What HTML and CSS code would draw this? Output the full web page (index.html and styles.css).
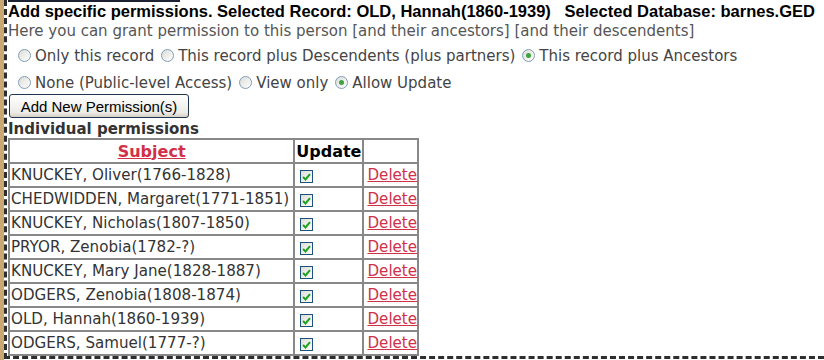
FILE: index.html
```html
<!DOCTYPE html>
<html lang="en">
<head>
  <meta charset="UTF-8" />
  <title>Permissions</title>
  <link rel="stylesheet" href="styles.css">
</head>
<body>

  <div class="page">
    <div class="topbar"></div>

    <!-- Heading with the record and database in use -->
    <div class="heading">Add specific permissions. Selected Record: OLD, Hannah(1860-1939) &nbsp; Selected Database: barnes.GED</div>
    <div class="intro">Here you can grant permission to this person [and their ancestors] [and their descendents]</div>

    <!-- Scope of the permission -->
    <div class="options">
      <label><span class="radio"></span>Only this record</label>
      <label><span class="radio"></span>This record plus Descendents (plus partners)</label>
      <label><span class="radio on"></span>This record plus Ancestors</label>
    </div>

    <!-- Access level -->
    <div class="options">
      <label><span class="radio"></span>None (Public-level Access)</label>
      <label><span class="radio"></span>View only</label>
      <label><span class="radio on"></span>Allow Update</label>
    </div>

    <button class="addBtn">Add New Permission(s)</button>

    <div class="subhead">Individual permissions</div>

    <table class="perms">
      <thead>
        <tr>
          <th class="subject"><a href="#">Subject</a></th>
          <th>Update</th>
          <th></th>
        </tr>
      </thead>
      <tbody id="rows"></tbody>
    </table>
  </div>

  <script>
    // People that already have permissions on this record
    const people = [
      "KNUCKEY, Oliver(1766-1828)",
      "CHEDWIDDEN, Margaret(1771-1851)",
      "KNUCKEY, Nicholas(1807-1850)",
      "PRYOR, Zenobia(1782-?)",
      "KNUCKEY, Mary Jane(1828-1887)",
      "ODGERS, Zenobia(1808-1874)",
      "OLD, Hannah(1860-1939)",
      "ODGERS, Samuel(1777-?)"
    ];

    const tick = '<svg width="9" height="8" viewBox="0 0 9 8"><path d="M1 4 L3.5 6.5 L8 1.2" fill="none" stroke="#21a121" stroke-width="2"/></svg>';

    const body = document.getElementById("rows");
    people.forEach(name => {
      const tr = document.createElement("tr");
      tr.innerHTML = `
        <td>${name}</td>
        <td><span class="check">${tick}</span></td>
        <td><a href="#">Delete</a></td>
      `;
      body.appendChild(tr);
    });
  </script>

</body>
</html>
```

FILE: styles.css
```css
/* Old-style admin page with a tan strip on the left */
body {
  margin: 0;
  min-height: 100vh;
  border-left: 4px solid #c9a874;
  background-color: #fff;
  font-family: "DejaVu Sans", Verdana, sans-serif;
  font-size: 15px;
  color: #333;
}

.page {
  background: #fff;
  border-left: 3px dashed #2e2e2e;
  border-bottom: 3px dashed #2e2e2e;
  padding: 0 0 0 1px;
}

.topbar {
  width: 172px;
  border-bottom: 2px solid #1c2233;
}

.heading {
  font-family: "Liberation Sans", Arial, sans-serif;
  font-weight: bold;
  font-size: 16.5px;
  color: #000;
  line-height: 19px;
}

.intro {
  color: #555;
  line-height: 21px;
}

/* Rows of radio choices */
.options {
  display: flex;
  gap: 7px;
  padding-left: 10px;
  height: 27px;
  align-items: center;
  color: #444;
}

.options label {
  display: flex;
  align-items: center;
  gap: 4px;
}

.radio {
  width: 11px;
  height: 11px;
  border: 1px solid #7f9db9;
  border-radius: 50%;
  background: linear-gradient(135deg, #dcdcd6, #fff);
  position: relative;
}

.radio.on::after {
  content: "";
  position: absolute;
  left: 3px;
  top: 3px;
  width: 5px;
  height: 5px;
  border-radius: 50%;
  background: #3fa33f;
}

.addBtn {
  margin: -2px 0 0 1px;
  height: 24px;
  width: 180px;
  padding: 0;
  font-family: "Liberation Sans", Arial, sans-serif;
  font-size: 15px;
  color: #000;
  border: 1px solid #1f3550;
  border-radius: 3px;
  background: linear-gradient(#fff, #ecebe6 80%, #d6d0c5);
}

.subhead {
  font-weight: bold;
  color: #333;
  line-height: 18px;
  margin-top: 2px;
}

/* Permissions table */
.perms {
  border-collapse: collapse;
  border: 2px solid #888;
}

.perms th,
.perms td {
  border: 2px solid #888;
  padding: 0 1px;
  height: 22px;
  white-space: nowrap;
}

.perms th {
  font-size: 16px;
  color: #000;
  height: 22px;
}

.perms td {
  color: #333;
  font-size: 15.1px;
}

.perms td:first-child {
  padding-right: 4px;
}

.perms td:nth-child(2) {
  padding-left: 5px;
  width: 60px;
}

.perms td:nth-child(3) {
  padding: 0 0 0 3px;
}

.perms a {
  color: #d23048;
}

.check {
  display: inline-block;
  width: 11px;
  height: 11px;
  border: 1px solid #1c5180;
  background: linear-gradient(135deg, #dcdcd6, #fff);
  vertical-align: -1px;
  text-align: center;
  line-height: 10px;
}
```
